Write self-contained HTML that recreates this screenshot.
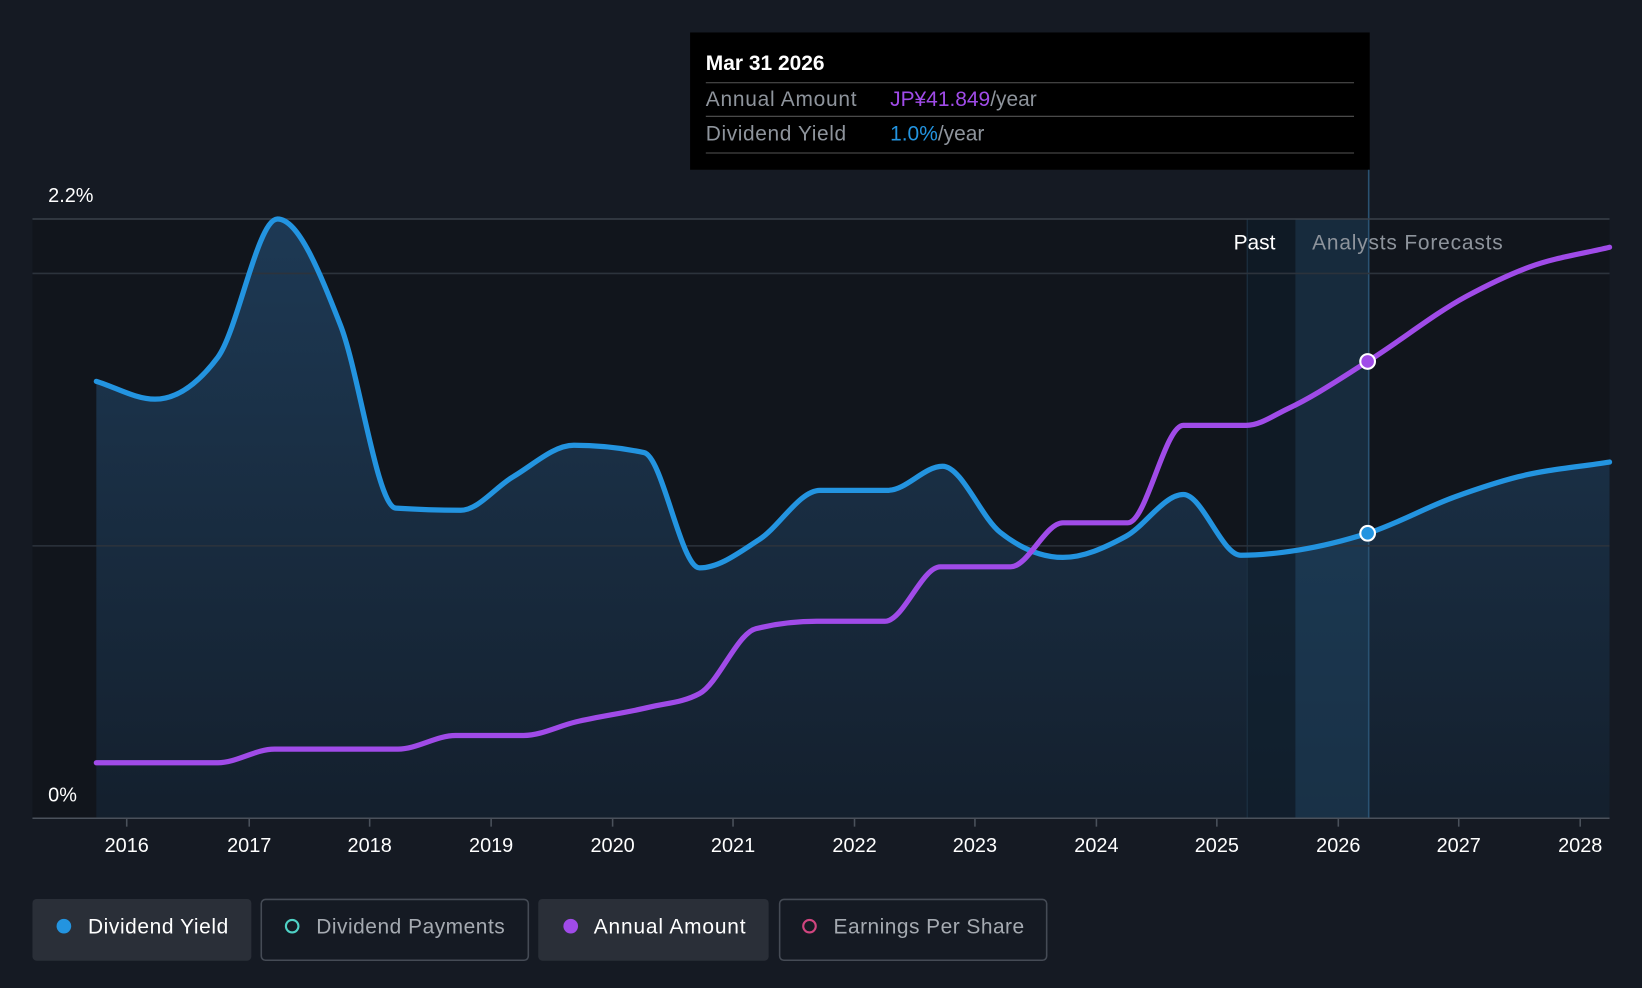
<!DOCTYPE html>
<html><head><meta charset="utf-8"><style>
html,body{margin:0;padding:0;background:#151a23;width:1642px;height:988px;overflow:hidden;font-family:"Liberation Sans",Roboto,sans-serif}
svg{display:block}
</style></head><body>
<svg id="s" width="1642" height="988" viewBox="0 0 1568 943" preserveAspectRatio="none">
<defs>
<linearGradient id="g" x1="0" y1="0" x2="0" y2="1"><stop offset="0" stop-color="#1e3b57"/><stop offset="1" stop-color="#14202e"/></linearGradient>
</defs>
<rect width="1568" height="943" fill="#151a23"/>
<rect x="31" y="209" width="1506" height="572" fill="#11151c"/>
<path id="area" fill="url(#g)" opacity="0.95"/>
<rect x="1191" y="209" width="46" height="572" fill="#0f1e2b" opacity="0.6"/>
<rect x="1237" y="209" width="70" height="572" fill="#1f4666" opacity="0.45"/>
<line x1="1307" y1="160" x2="1307" y2="781" stroke="#2a5272" stroke-width="1.5"/>
<line x1="1191" y1="209" x2="1191" y2="781" stroke="#1e3346" stroke-width="1"/>
<line x1="31" y1="209" x2="1537" y2="209" stroke="#3a414b" stroke-width="1.5"/>
<line x1="31" y1="261" x2="1537" y2="261" stroke="#2c333c" stroke-width="1.5"/>
<line x1="31" y1="521" x2="1537" y2="521" stroke="#2c333c" stroke-width="1.5"/>
<line x1="31" y1="781" x2="1537" y2="781" stroke="#4a515b" stroke-width="1.5"/>
<g id="ticks" stroke="#4a515b" stroke-width="1.5"></g>
<path id="blue" fill="none" stroke="#2394e0" stroke-width="5" stroke-linecap="round" stroke-linejoin="round"/>
<path id="purp" fill="none" stroke="#a04be8" stroke-width="5" stroke-linecap="round" stroke-linejoin="round"/>
<circle cx="1306" cy="345" r="7" fill="#a04be8" stroke="#fff" stroke-width="2"/>
<circle cx="1306" cy="509" r="7" fill="#2394e0" stroke="#fff" stroke-width="2"/>
<g font-size="19" fill="#fff">
<text x="46" y="193">2.2%</text>
<text x="46" y="765">0%</text>
<text x="1178" y="238" font-size="20">Past</text>
<text x="1253" y="238" fill="#8e949c" font-size="20" textLength="182">Analysts Forecasts</text>
</g>
<g id="years" font-size="19" fill="#fff" text-anchor="middle"></g>
<rect x="659" y="31" width="649" height="131" fill="#000"/>
<g font-size="20">
<text x="674" y="67" fill="#fff" font-weight="bold">Mar 31 2026</text>
<line x1="674" y1="79" x2="1293" y2="79" stroke="#555"/>
<text x="674" y="101" fill="#8e949c" textLength="144">Annual Amount</text>
<text x="850" y="101" fill="#a04be8">JP¥41.849<tspan fill="#8e949c">/year</tspan></text>
<line x1="674" y1="111" x2="1293" y2="111" stroke="#555"/>
<text x="674" y="134" fill="#8e949c" textLength="134">Dividend Yield</text>
<text x="850" y="134" fill="#2394e0">1.0%<tspan fill="#8e949c">/year</tspan></text>
<line x1="674" y1="146" x2="1293" y2="146" stroke="#555"/>
</g>
<g font-size="20">
<rect x="31" y="858" width="209" height="59" rx="4" fill="#2a2f38"/>
<circle cx="61" cy="884" r="7" fill="#2394e0"/>
<text x="84" y="891" fill="#fff" textLength="134">Dividend Yield</text>
<rect x="249.5" y="858.5" width="255" height="58" rx="4" fill="none" stroke="#454b55" stroke-width="1.5"/>
<circle cx="279" cy="884" r="6" fill="none" stroke="#4fd1c5" stroke-width="2"/>
<text x="302" y="891" fill="#a5aab1" textLength="180">Dividend Payments</text>
<rect x="514" y="858" width="220" height="59" rx="4" fill="#2a2f38"/>
<circle cx="545" cy="884" r="7" fill="#a04be8"/>
<text x="567" y="891" fill="#fff" textLength="145">Annual Amount</text>
<rect x="744.5" y="858.5" width="255" height="58" rx="4" fill="none" stroke="#454b55" stroke-width="1.5"/>
<circle cx="773" cy="884" r="6" fill="none" stroke="#d0457f" stroke-width="2"/>
<text x="796" y="891" fill="#a5aab1" textLength="182">Earnings Per Share</text>
</g>
</svg>
<script>
function mono(p){var n=p.length,s=[],m=[];for(var i=0;i<n-1;i++)s.push((p[i+1][1]-p[i][1])/(p[i+1][0]-p[i][0]));
m[0]=s[0];m[n-1]=s[n-2];
for(var i=1;i<n-1;i++){var h0=p[i][0]-p[i-1][0],h1=p[i+1][0]-p[i][0],s0=s[i-1],s1=s[i];var q=(s0*h1+s1*h0)/(h0+h1);
m[i]=(Math.sign(s0)+Math.sign(s1))*Math.min(Math.abs(s0),Math.abs(s1),0.5*Math.abs(q));}
var d="M"+p[0][0]+","+p[0][1];
for(var i=0;i<n-1;i++){var h=(p[i+1][0]-p[i][0])/3;d+=" C"+(p[i][0]+h).toFixed(1)+","+(p[i][1]+m[i]*h).toFixed(1)+" "+(p[i+1][0]-h).toFixed(1)+","+(p[i+1][1]-m[i+1]*h).toFixed(1)+" "+p[i+1][0]+","+p[i+1][1];}
return d;}
var B=[[92,364],[148,381],[208,341],[265,209],[325,310],[378,485],[440,487],[490,455],[548,425],[615,432],[668,542],[725,515],[783,468],[848,468],[900,445],[955,508],[1015,532],[1075,512],[1130,472],[1185,530],[1240,525],[1306,509],[1390,474],[1450,455],[1537,441]];
var P=[[92,728],[208,728],[262,715],[380,715],[435,702],[500,702],[550,689],[620,675],[668,662],[722,600],[780,593],[845,593],[898,541],[965,541],[1015,499],[1077,499],[1130,406],[1190,406],[1230,390],[1306,345],[1400,283],[1460,255],[1537,236]];
var b=mono(B);document.getElementById("blue").setAttribute("d",b);
document.getElementById("area").setAttribute("d",b+" L1537,781 L92,781 Z");
document.getElementById("purp").setAttribute("d",mono(P));
var yx=[121,238,353,469,585,700,816,931,1047,1162,1278,1393,1509],g=document.getElementById("years"),t=document.getElementById("ticks"),ns="http://www.w3.org/2000/svg";
yx.forEach(function(x,i){var e=document.createElementNS(ns,"text");e.setAttribute("x",x);e.setAttribute("y",813);e.textContent=2016+i;g.appendChild(e);
var l=document.createElementNS(ns,"line");l.setAttribute("x1",x);l.setAttribute("x2",x);l.setAttribute("y1",781);l.setAttribute("y2",789);t.appendChild(l);});
</script>
</body></html>
